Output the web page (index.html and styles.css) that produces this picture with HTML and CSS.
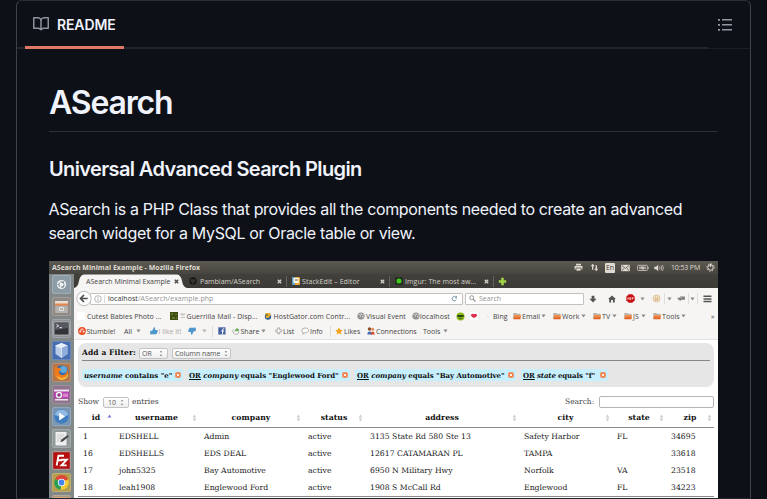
FILE: index.html
```html
<!DOCTYPE html>
<html lang="en">
<head>
<meta charset="utf-8">
<title>ASearch README</title>
<link rel="stylesheet" href="styles.css">
</head>
<body>
<svg class="defs" width="0" height="0" aria-hidden="true">
  <defs>
    <linearGradient id="orange" x1="0" y1="0" x2="0" y2="1"><stop offset="0" stop-color="#f59a5c"/><stop offset="1" stop-color="#de5a1c"/></linearGradient>
    <symbol id="folder" viewBox="0 0 8 8"><path d="M.3 1h3l.7.8h3.4V7H.3z" fill="#b9b3ab"/><path d="M1 3h7l-.6 4.3H.4z" fill="url(#orange)"/></symbol>
    <symbol id="tri" viewBox="0 0 5 4"><path d="M.4.5h4.2L2.5 3.6z" fill="#8b8b8b"/></symbol>
    <symbol id="globe" viewBox="0 0 8 8"><circle cx="4" cy="4" r="3.6" fill="#8d8d8d"/><path d="M1.2 2.5l2 .4.6 1.4-1.2 1M4.2 1l-.4 1.2 1.5.5 1.6-.4M5 4.400l1.5.3-.9 1.5" stroke="#ddd" stroke-width=".8" fill="none"/></symbol>
    <symbol id="close" viewBox="0 0 5 5"><path d="M.8.8l3.4 3.4M4.2.8L.8 4.2" stroke="currentColor" stroke-width="1.3"/></symbol>
    <symbol id="remove" viewBox="0 0 6 6"><rect x=".3" y=".3" width="5.4" height="5.4" rx="1" fill="#f37a3e"/><path d="M1.7 1.7l2.6 2.6M4.3 1.7L1.7 4.3" stroke="#fff" stroke-width=".9"/></symbol>
    <symbol id="spin" viewBox="0 0 4 7"><path d="M.7 2.3L2 .8l1.3 1.5zM.7 4.7L2 6.2l1.3-1.5z" fill="#777"/></symbol>
    <symbol id="sort" viewBox="0 0 5 8"><path d="M.7 3.4L2.5.6l1.8 2.8zM.7 4.6l1.8 2.8 1.8-2.8z" fill="#cccccc"/></symbol>
    <symbol id="asc" viewBox="0 0 5 8"><path d="M.5 3.4L2.5.6l2 2.8z" fill="#7b7be0"/></symbol>
    <symbol id="thumb" viewBox="0 0 8 8"><path d="M.2 3.7h2L4 .3c1.200-.2 1.400.8.900 2.600h2.500c.7.400.4 1 .1 1.200.3.500.1 1-.3 1.100.2.500 0 .9-.4 1 .1.600-.2 1-.8 1H2.200L.2 7.600z" fill="#4e97cc"/></symbol>
  </defs>
</svg>

<main class="panel">
  <header class="panel-head">
    <div class="head-main">
      <a class="tab-readme">
        <svg width="16" height="16" viewBox="0 0 16 16" fill="#8b929b"><path d="M0 1.75A.75.75 0 0 1 .75 1h4.253c1.227 0 2.317.59 3 1.501A3.743 3.743 0 0 1 11.006 1h4.245a.75.75 0 0 1 .75.75v10.5a.75.75 0 0 1-.75.75h-4.507a2.25 2.25 0 0 0-1.591.659l-.622.621a.75.75 0 0 1-1.06 0l-.622-.621A2.25 2.25 0 0 0 5.258 13H.75a.75.75 0 0 1-.75-.75Zm7.251 10.324.004-5.073-.002-2.253A2.25 2.25 0 0 0 5.003 2.5H1.5v9h3.757a3.75 3.75 0 0 1 1.994.574ZM8.755 4.75l-.004 7.322a3.752 3.752 0 0 1 1.992-.572H14.5v-9h-3.495a2.25 2.25 0 0 0-2.25 2.25Z"/></svg>
        <span>README</span>
      </a>
    </div>
    <div class="head-side">
      <svg width="16" height="16" viewBox="0 0 16 16" fill="#9198a1"><path d="M5 3.1h10v1.3H5zM5 8.1h10v1.3H5zM5 13.1h10v1.3H5zM1 2.9h2v1.8H1zM1 7.9h2v1.8H1zM1 12.9h2v1.8H1z"/></svg>
    </div>
  </header>

  <article class="readme">
    <h1>ASearch</h1>
    <h2>Universal Advanced Search Plugin</h2>
    <p>ASearch is a PHP Class that provides all the components needed to create an advanced<br>search widget for a MySQL or Oracle table or view.</p>

    <section class="desktop">
      <div class="titlebar">
        <b>ASearch Minimal Example - Mozilla Firefox</b>
        <svg width="9" height="9" viewBox="0 0 9 9" fill="#dfdbd2"><path d="M2 .8h5v1.7H2zM.6 3h7.8v3.4H.6z"/><path d="M2 5h5v3H2z" stroke="#4a4741" stroke-width=".7"/></svg>
        <svg width="9" height="9" viewBox="0 0 9 9" fill="#dfdbd2"><path d="M2.7.7l2 2.5H3.3v3.5H2V3.2H.6zM6.3 8.3l2-2.5H7V2.3H5.6v3.5H4.2z"/></svg>
        <span class="lang">En</span>
        <svg width="9" height="8" viewBox="0 0 9 8"><path d="M.2.8h8.6v6.4H.2z" fill="#dfdbd2"/><path d="M1 1.6l3.5 2.8L8 1.6M1 6.4l2.2-2M8 6.4l-2.2-2" stroke="#504d46" stroke-width=".8" fill="none"/></svg>
        <svg width="12" height="8" viewBox="0 0 12 8"><rect x=".6" y="1.3" width="9.8" height="5.2" rx=".8" fill="none" stroke="#c8c4bb" stroke-width=".9"/><path d="M2 2.5h7v2.8H2zM11 2.8h.9v2.3H11z" fill="#a5a29a"/><path d="M5 2.3L4.6 4h2L6 5.6" stroke="#fff" stroke-width=".6" fill="none"/></svg>
        <svg width="10" height="8" viewBox="0 0 10 8"><path d="M.3 2.7h1.8L4.2.8v6.4L2.1 5.3H.3z" fill="#dfdbd2"/><path d="M5.5 2.5q1 1.5 0 3M7 1.7q1.5 2.3 0 4.6M8.4 1q2 3 0 6" fill="none" stroke="#c9c5bc" stroke-width=".8"/></svg>
        <span class="clock">10:53 PM</span>
        <svg width="9" height="9" viewBox="0 0 9 9" fill="none" stroke="#dfdbd2"><circle cx="4.5" cy="4.5" r="2.7" stroke-width="1"/><circle cx="4.5" cy="4.5" r="3.700" stroke-width="1" stroke-dasharray="1.300 1.600"/><path d="M4.500.8v3.200" stroke-width="1"/></svg>
      </div>

      <div class="workspace">
        <nav class="launcher">
          <svg class="tile t-ubuntu" viewBox="0 0 19 19"><circle cx="9.5" cy="9.5" r="4.6" fill="#f2f3f3"/><circle cx="9.5" cy="9.5" r="2.6" fill="none" stroke="#7f8e97" stroke-width="1.1" stroke-dasharray="4.4 1"/><path d="M5.4 9.5h1M11.4 6l-.6.9M11.4 13l-.6-.9" stroke="#7f8e97"/></svg>
          <svg class="tile t-files" viewBox="0 0 19 19"><path d="M3 4h13v12H3z" fill="#a9a29a"/><path d="M3 4h13v3H3z" fill="#e6ddd3"/><path d="M3 6.5h13v2H3z" fill="#e8844c"/><path d="M3.5 9h12v7h-12z" fill="#b6b2ad"/><path d="M7.5 10.5h4v3h-4z" fill="none" stroke="#eee" stroke-width=".8"/></svg>
          <svg class="tile t-term" viewBox="0 0 19 19"><rect x="2" y="3" width="15" height="13" rx="1" fill="#32343a" stroke="#d0d0d0" stroke-width=".7"/><path d="M3 4h13v5L3 11z" fill="#555860"/><path d="M4.5 5.5l2 1.3-2 1.3M7.5 8.7h2.5" stroke="#fff" stroke-width=".9" fill="none"/></svg>
          <svg class="tile t-box" viewBox="0 0 19 19"><path d="M9.5 2l6 2.5v8.6l-6 3.9-6-3.9V4.5z" fill="#b7cce9"/><path d="M9.5 2l6 2.5-6 2.6-6-2.6z" fill="#e7f0fa"/><path d="M9.5 7.1l6-2.6v8.6l-6 3.9z" fill="#8faedb"/><path d="M3.5 4.5l6 2.6V17" fill="none" stroke="#fff" stroke-width=".6"/></svg>
          <svg class="tile t-fox" viewBox="0 0 19 19"><circle cx="9.8" cy="9.5" r="7" fill="#2d69ae"/><circle cx="11.3" cy="6.500" r="3.6" fill="#60a9dc"/><path d="M2.600 5.500q.3-1.700 1.800-2.900l.6 2.200q2.700-.6 4.300 1.700L7 8.500q0 3.500 4 3.600 3.300-.3 4.600-5.800 1.700 3 .4 6-2 4.700-6.800 4.600-4.400-.1-6.300-4-1.200-3.700-.3-7.400z" fill="#ee7a1b"/><path d="M4.500 12q3 4 7.500 2.600 3-1 4.500-4-.5 6-6.700 6.300-4-.2-5.300-4.900z" fill="#f7bd3a"/></svg>
          <svg class="tile t-shot" viewBox="0 0 19 19"><path d="M2 4.500h15v9H2z" fill="#b443ad"/><path d="M2 4.500h15v2H2zM3 14h13v1.500H3z" fill="#e9e3e9"/><circle cx="7" cy="10" r="3.200" fill="#eee"/><circle cx="7" cy="10" r="1.700" fill="#8b378b"/><path d="M11 8.500h5v3.500h-5z" fill="#db83ce"/></svg>
          <svg class="tile t-play" viewBox="0 0 19 19"><circle cx="9.500" cy="9.500" r="7.200" fill="#3e7cc0"/><path d="M2.700 8a7 7 0 0 1 13.600 0q-6 3-13.600 0z" fill="#8eb9e4"/><path d="M7.200 5.600v7.800l6-3.900z" fill="#fff"/></svg>
          <svg class="tile t-edit" viewBox="0 0 19 19"><path d="M3.500 3h11v13.500h-11z" fill="#efefef"/><path d="M5 6h7M5 8h7M5 10h5M5 12h4" stroke="#bdbdbd" stroke-width=".7"/><path d="M8.500 13l1-2.500 6-4.500 1.300 1.600-6 4.800z" fill="#4b4b4b"/></svg>
          <svg class="tile t-fz" viewBox="0 0 19 19"><rect x="1.300" y="1.300" width="16.400" height="16.400" fill="#b70e0e"/><path d="M4.700 14.500L6.500 4.700H12M5.500 9.200h4.500M9.300 8.700h5.500l-5.300 5.700h5.200" fill="none" stroke="#fff" stroke-width="1.900"/></svg>
          <svg class="tile t-chrome" viewBox="0 0 19 19"><circle cx="9.500" cy="9.500" r="7.300" fill="#f4cb32"/><path d="M9.500 9.500L3.200 5.800a7.300 7.300 0 0 1 12.900.4z" fill="#dc4437"/><path d="M9.500 9.500L3.200 5.800a7.300 7.300 0 0 0 5.400 11z" fill="#2b9c56"/><circle cx="9.500" cy="9.500" r="3.700" fill="#fff"/><circle cx="9.500" cy="9.500" r="2.900" fill="#4385ec"/></svg>
          <svg class="tile t-last" viewBox="0 0 19 19"><path d="M2 2h15v5H2z" fill="#d6a878"/></svg>
        </nav>

        <div class="browser">
          <div class="tabs">
            <div class="tab-active"><span>ASearch Minimal Example</span><svg width="5" height="5"><use href="#close"/></svg></div>
            <svg width="8" height="8" viewBox="0 0 8 8"><circle cx="4" cy="4" r="3.700" fill="#171717"/><path d="M1.800 1.500l1.200.7h2l1.200-.7.200 2.800q-.5 1-1.700 1.200v2H3.300v-2Q2 5.300 1.600 4.300z" fill="#35342f"/></svg>
            <span>Pamblam/ASearch</span>
            <svg width="5" height="5"><use href="#close"/></svg>
            <i class="sep"></i>
            <svg width="8" height="8" viewBox="0 0 8 8"><rect width="8" height="8" rx="1" fill="#e9a83c"/><path d="M0 0h3v8H1q-1 0-1-1z" fill="#5e9fce"/><path d="M1.500 1h5.200v5H1.500z" fill="#fffbe6"/><path d="M3.800 2v2M5 2v2" stroke="#555" stroke-width=".8"/></svg>
            <span class="stack">StackEdit – Editor</span>
            <svg width="5" height="5"><use href="#close"/></svg>
            <i class="sep"></i>
            <svg width="8" height="8" viewBox="0 0 8 8"><rect width="8" height="8" rx="1" fill="#24301f"/><circle cx="4" cy="4" r="2.500" fill="#42c71c"/></svg>
            <span class="imgur">Imgur: The most aw...</span>
            <svg width="5" height="5"><use href="#close"/></svg>
            <i class="sep"></i>
            <svg width="9" height="9" viewBox="0 0 9 9"><path d="M3.200.8h2.600v2.400h2.400v2.600H5.800v2.400H3.200V5.800H.8V3.200h2.400z" fill="#a4d444"/></svg>
          </div>

          <div class="toolbar">
            <svg class="back" width="17" height="17" viewBox="0 0 17 17"><circle cx="8" cy="8.500" r="7.200" fill="#fdfdfd" stroke="#b4b4b2" stroke-width=".9"/><path d="M8 5L4.500 8.500 8 12M5 8.500h6.700" fill="none" stroke="#4c4c4c" stroke-width="1.700"/></svg>
            <div class="urlbar">
              <svg width="8" height="8" viewBox="0 0 8 8" fill="none" stroke="#a5a5a5"><circle cx="4" cy="4" r="3.300" stroke-width=".8"/><path d="M4 1.900v.9M4 3.500v2.500" stroke-width=".9"/></svg>
              <i></i>
              <span><em>localhost</em>/ASearch/example.php</span>
              <svg width="7" height="7" viewBox="0 0 7 7"><path d="M5.300 4.700A2.200 2.200 0 1 1 5 2.200" fill="none" stroke="#7895a5" stroke-width="1"/><path d="M6 .7v2.600H3.700z" fill="#7895a5"/></svg>
            </div>
            <div class="searchbar">
              <svg width="7" height="7" viewBox="0 0 7 7" fill="none" stroke="#8d8d8d"><circle cx="2.700" cy="2.700" r="2" stroke-width=".9"/><path d="M4.200 4.200l2.200 2.300" stroke-width="1.100"/></svg>
              <span>Search</span>
            </div>
            <svg width="8" height="8" viewBox="0 0 8 8"><path d="M2.600.7h2.800v3h2.200L4 7.500.4 3.700h2.200z" fill="#555"/></svg>
            <svg width="8" height="8" viewBox="0 0 8 8"><path d="M4 .4l3.900 3.500H6.800v3.500H4.900V5H3.100v2.400H1.200V3.900H.1z" fill="#555"/></svg>
            <svg width="9" height="9" viewBox="0 0 9 9"><path d="M2.700.3h3.600l2.400 2.400v3.600L6.300 8.700H2.700L.3 6.300V2.700z" fill="#c90f12"/><path d="M1.400 5.500l.8-2 .8 2M3.800 3.600v1.900h.8V3.600zM6.200 5.600v-2h1v1H6.200" stroke="#fff" stroke-width=".6" fill="none"/></svg>
            <svg width="5" height="4"><use href="#tri"/></svg>
            <svg width="9" height="9" viewBox="0 0 9 9"><circle cx="4.500" cy="4.500" r="3.500" fill="#f3dfbf" stroke="#d6bd94" stroke-width=".8"/><path d="M3 3.700h.8M5.300 3.700h.8M3 6q1.500-1.400 3 0" stroke="#a98754" stroke-width=".8" fill="none"/></svg>
            <i class="sep"></i>
            <svg width="5" height="4"><use href="#tri"/></svg>
            <svg width="9" height="8" viewBox="0 0 9 8"><path d="M.5 2.800h2l.8-1.200h4.500v3.200H4L3 6.400l-.4-1.600H1.200z" fill="#777"/><path d="M2.500 2.800h3" stroke="#ddd" stroke-width=".6"/></svg>
            <i class="sep"></i>
            <svg width="5" height="4"><use href="#tri"/></svg>
            <i class="sep"></i>
            <svg width="9" height="8" viewBox="0 0 9 8"><path d="M.5 1.200h8M.5 3.900h8M.5 6.600h8" stroke="#555" stroke-width="1.500"/></svg>
          </div>

          <div class="bookmarks">
            <i class="blank"></i><span>Cutest Babies Photo ...</span>
            <svg width="8" height="8" viewBox="0 0 8 8"><rect width="8" height="8" fill="#3e4f15"/><path d="M1 1h2v2H1zM5 2h2v1H5zM2 5h3v2H2zM6 5h1v2H6z" fill="#667724"/></svg>
            <svg width="6" height="6" viewBox="0 0 6 6"><path d="M.5 1h4.500M.5 4.600h4.500M.8 1.200l2 1.300 2-1.300" stroke="#aaa" stroke-width=".7" fill="none"/></svg>
            <span>Guerrilla Mail - Disp...</span>
            <svg width="8" height="8" viewBox="0 0 8 8"><circle cx="4" cy="4.500" r="3.200" fill="#315f96"/><path d="M1.500 1h4.300l1.200 2-2.700 3H2z" fill="#e5ae2c"/><circle cx="3" cy="3" r=".7" fill="#222"/></svg>
            <span>HostGator.com Contr...</span>
            <svg width="8" height="8"><use href="#globe"/></svg><span>Visual Event</span>
            <svg width="8" height="8"><use href="#globe"/></svg><span>localhost</span>
            <svg width="9" height="9" viewBox="0 0 9 9"><circle cx="4.500" cy="4.500" r="4" fill="#87b71a"/><path d="M1.400 3h6.200v2H1.400z" fill="#2f4511"/><path d="M3 6.400h3" stroke="#2f4511" stroke-width=".8"/></svg>
            <svg width="8" height="8" viewBox="0 0 8 8"><rect width="8" height="8" fill="#fff"/><path d="M.7 3.200q1.700-2.200 3.300-.9 1.600-1.300 3.300.9Q4 8.800.7 3.200z" fill="#df2f50"/></svg>
            <span class="dim">·</span><span>Bing</span>
            <svg width="8" height="8"><use href="#folder"/></svg><span>Email</span><svg width="5" height="4"><use href="#tri"/></svg>
            <svg width="8" height="8"><use href="#folder"/></svg><span>Work</span><svg width="5" height="4"><use href="#tri"/></svg>
            <svg width="8" height="8"><use href="#folder"/></svg><span>TV</span><svg width="5" height="4"><use href="#tri"/></svg>
            <svg width="8" height="8"><use href="#folder"/></svg><span>JS</span><svg width="5" height="4"><use href="#tri"/></svg>
            <svg width="8" height="8"><use href="#folder"/></svg><span>Tools</span><svg width="5" height="4"><use href="#tri"/></svg>
            <span>»</span>
          </div>

          <div class="stumble">
            <svg width="8" height="8" viewBox="0 0 8 8"><circle cx="4" cy="4" r="3.900" fill="#e94f26"/><path d="M1.500 4.200v.6q.8 1 1.300 0V3q.2-1.200 1.200-1.200T5.200 3v.4M5.200 4v1q.6.900 1.300-.2v-.7" stroke="#fff" stroke-width=".9" fill="none"/></svg>
            <span>Stumble!</span><span>All</span><svg width="5" height="4"><use href="#tri"/></svg>
            <svg width="8" height="8"><use href="#thumb"/></svg><span class="dim">I like it!</span>
            <svg class="down" width="8" height="8"><use href="#thumb"/></svg><svg class="faint" width="5" height="4"><use href="#tri"/></svg>
            <i class="sep"></i>
            <svg width="8" height="8" viewBox="0 0 8 8"><rect x=".3" y=".3" width="7.200" height="7.200" fill="#43619d"/><path d="M6.200 1.700H5.500q-.9 0-.9.900v4.900M3.400 4h2.700" stroke="#fff" stroke-width="1" fill="none"/></svg>
            <svg width="8" height="8" viewBox="0 0 8 8"><path d="M1.800 2.300a3 3 0 1 0 4.500.5" fill="none" stroke="#9aa" stroke-width=".8"/><path d="M2.500 5q0-2.800 2-3V.8l2.800 2-2.800 2V3.600Q3 3.700 2.500 5z" fill="#62a64b"/></svg>
            <span>Share</span><svg width="5" height="4"><use href="#tri"/></svg>
            <svg width="8" height="8" viewBox="0 0 8 8"><path d="M2.800.9h1.900v2h2v1.900h-2v2H2.800v-2h-2V2.900h2z" fill="#fff" stroke="#999" stroke-width=".8"/></svg><span>List</span>
            <svg width="8" height="8" viewBox="0 0 8 8"><path d="M4.200 1c2 0 3.300.9 3.300 2.400S6 5.800 4 5.800L1.800 7.200l.4-1.800Q.8 4.800.8 3.400.8 1 4.200 1z" fill="#fff" stroke="#999" stroke-width=".8"/></svg><span>Info</span>
            <i class="sep"></i>
            <svg width="8" height="8" viewBox="0 0 8 8"><path d="M4 .3l1.100 2.500 2.700.3-2 1.800.6 2.700L4 6.200 1.600 7.600l.6-2.700-2-1.800 2.700-.3z" fill="#f3a11e"/></svg><span>Likes</span>
            <svg width="8" height="8" viewBox="0 0 8 8"><circle cx="2.500" cy="2" r="1.700" fill="#8b4a2a"/><circle cx="5.700" cy="2.300" r="1.500" fill="#d98e5c"/><path d="M.3 7.500q0-3 2.500-3t2.500 3z" fill="#3e6fb5"/><path d="M3.600 7.500q.5-3 2.200-3t2 3z" fill="#d74f33"/></svg><span>Connections</span>
            <span>Tools</span><svg width="5" height="4"><use href="#tri"/></svg>
          </div>

          <div class="content">
            <div class="filters">
              <div class="filter-add">
                <b>Add a Filter:</b>
                <span class="select sel-or">OR<svg width="4" height="7"><use href="#spin"/></svg></span>
                <span class="select sel-col">Column name<svg width="4" height="7"><use href="#spin"/></svg></span>
              </div>
              <div class="chips">
                <span class="chip c1"><span><i>username</i> contains "e"</span><svg width="6" height="6"><use href="#remove"/></svg></span>
                <span class="chip c2"><span><u>OR</u> <i>company</i> equals "Englewood Ford"</span><svg width="6" height="6"><use href="#remove"/></svg></span>
                <span class="chip c3"><span><u>OR</u> <i>company</i> equals "Bay Automotive"</span><svg width="6" height="6"><use href="#remove"/></svg></span>
                <span class="chip c4"><span><u>OR</u> <i>state</i> equals "f"</span><svg width="6" height="6"><use href="#remove"/></svg></span>
              </div>
            </div>

            <div class="controls">
              <span>Show</span><span class="select sel-len">10<svg width="4" height="7"><use href="#spin"/></svg></span><span>entries</span>
              <label>Search:</label><span class="input"></span>
            </div>

            <div class="table">
              <div class="row head">
                <div><b>id</b><svg width="5" height="8"><use href="#asc"/></svg></div>
                <div><b>username</b><svg width="5" height="8"><use href="#sort"/></svg></div>
                <div><b>company</b><svg width="5" height="8"><use href="#sort"/></svg></div>
                <div><b>status</b><svg width="5" height="8"><use href="#sort"/></svg></div>
                <div><b>address</b><svg width="5" height="8"><use href="#sort"/></svg></div>
                <div><b>city</b><svg width="5" height="8"><use href="#sort"/></svg></div>
                <div><b>state</b><svg width="5" height="8"><use href="#sort"/></svg></div>
                <div><b>zip</b><svg width="5" height="8"><use href="#sort"/></svg></div>
              </div>
              <div class="row"><div>1</div><div>EDSHELL</div><div>Admin</div><div>active</div><div>3135 State Rd 580 Ste 13</div><div>Safety Harbor</div><div>FL</div><div>34695</div></div>
              <div class="row"><div>16</div><div>EDSHELLS</div><div>EDS DEAL</div><div>active</div><div>12617 CATAMARAN PL</div><div>TAMPA</div><div></div><div>33618</div></div>
              <div class="row"><div>17</div><div>john5325</div><div>Bay Automotive</div><div>active</div><div>6950 N Military Hwy</div><div>Norfolk</div><div>VA</div><div>23518</div></div>
              <div class="row"><div>18</div><div>leah1908</div><div>Englewood Ford</div><div>active</div><div>1908 S McCall Rd</div><div>Englewood</div><div>FL</div><div>34223</div></div>
            </div>
          </div>
        </div>
      </div>
    </section>
  </article>
</main>
</body>
</html>
```
FILE: styles.css
```css
* { box-sizing: border-box; }

body {
  margin: 0;
  height: 499px;
  overflow: hidden;
  background: #0d1017;
  color: #f0f3fb;
  font-family: Inter, sans-serif;
}

svg { display: block; flex: none; }
.defs { height: 0; }

.panel {
  width: 735px;
  height: 499px;
  margin-left: 16px;
  border: 1px solid #3d434b;
  border-top-color: #2a2e36;
  border-bottom-color: #22262e;
  border-radius: 6px 6px 0 0;
}

.panel-head { display: flex; height: 48px; }
.head-main {
  width: 691px;
  padding-left: 8px;
  border-bottom: 2px solid #21252d;
}
.tab-readme {
  display: flex;
  align-items: center;
  gap: 8px;
  width: 99px;
  height: 48px;
  padding: 0 8px;
  border-bottom: 3px solid #df7864;
  font-size: 14px;
  font-weight: 600;
  letter-spacing: -.13px;
}
.tab-readme span { padding-top: 2px; }
.head-side {
  flex: 1;
  padding: 15px 0 0 9px;
  border-bottom: 1px solid #1a1e26;
}

.readme { padding: 33px 32px 0; }
h1, h2, p { margin: 0; }
h1 {
  height: 50px;
  margin-bottom: 25px;
  border-bottom: 1px solid #2d323a;
  font-size: 32px;
  font-weight: 600;
  line-height: 42px;
  letter-spacing: -1.16px;
}
h2 {
  margin-bottom: 15px;
  font-size: 20px;
  font-weight: 600;
  line-height: 25px;
  letter-spacing: -.62px;
}
p {
  margin: 0 0 16px -.5px;
  font-size: 16px;
  line-height: 24px;
  letter-spacing: -.355px;
  white-space: nowrap;
}

.desktop {
  width: 669px;
  height: 237px;
  overflow: hidden;
  background: #fff;
  color: #444;
  font: 7px/1 "Open Sans", sans-serif;
  white-space: nowrap;
}

.titlebar {
  display: grid;
  grid-template-columns: 522px 16px 15px 16px 15.5px 17.5px 17px 34.5px 9px;
  align-items: center;
  height: 13px;
  padding-left: 3px;
  background: linear-gradient(#5d5a53, #47453f);
  color: #dfdbd2;
}
.titlebar b { letter-spacing: .01px; }
.lang {
  width: 10px;
  padding: 1.5px 0;
  border-radius: 1px;
  background: #dfdbd2;
  color: #45433e;
  text-align: center;
}
.clock { letter-spacing: -.14px; }

.workspace { display: flex; }
.launcher {
  display: flex;
  flex-direction: column;
  gap: 3px;
  width: 25px;
  height: 224px;
  padding: 1px 0 0 3px;
  overflow: hidden;
  background: #838889;
}
.tile {
  width: 19px;
  height: 19px;
  border-radius: 2px;
  box-shadow: inset 0 0 0 1px rgba(255, 255, 255, .18);
}
.t-ubuntu { background: #8b9ca6; }
.t-files { background: #8f8a85; }
.t-term { background: #8d9195; }
.t-box { background: #456db0; }
.t-fox { background: #b0764f; }
.t-shot { background: #8e748c; }
.t-play { background: #7895b4; }
.t-edit { background: #91999a; }
.t-fz { background: #9b8484; }
.t-chrome { background: #b59e4e; }
.t-last { background: #a69886; }

.browser { width: 644px; }
.tabs {
  display: grid;
  grid-template-columns: 115px 11px 77px 9px 6px 10px 78px 9px 6px 10px 78.5px 9px 5px 9px;
  align-items: center;
  height: 14px;
  background: linear-gradient(#42403b, #3b3a36);
  color: #d6d2c9;
}
.tab-active {
  display: flex;
  align-items: center;
  justify-content: space-between;
  width: 113px;
  height: 14px;
  padding: 0 8px 0 12px;
  background: #f6f5f3;
  color: #444;
  clip-path: path("M0 14Q4 13 5 7T10 .5H103Q107 1 108 7T113 14Z");
}
.stack { letter-spacing: .07px; }
.imgur { letter-spacing: .05px; }
.sep { width: 1px; height: 11px; background: #66645e; }

.toolbar {
  display: grid;
  grid-template-columns: 14px 375px 124px 19px 18px 14px 12px 12px 3px 10px 11px 2px 7px 6px 9px;
  align-items: center;
  height: 21px;
  padding-left: 2px;
  background: #f6f5f3;
}
.toolbar .sep, .stumble .sep { background: #dedddb; }
.back { z-index: 1; }
.urlbar, .searchbar {
  display: flex;
  align-items: center;
  height: 12px;
  border: 1px solid #c2c2c0;
  border-radius: 1px;
  background: #fff;
  color: #929292;
}
.urlbar { width: 373px; padding: 0 4px 0 3px; }
.urlbar i { width: 1px; height: 8px; margin: 0 3px 0 2px; background: #ddd; }
.urlbar span { flex: 1; letter-spacing: .06px; }
.urlbar em { color: #333; font-style: normal; }
.searchbar { gap: 3px; width: 119px; padding-left: 3px; }

.bookmarks, .stumble {
  display: grid;
  align-items: center;
  background: #f6f5f3;
}
.bookmarks {
  grid-template-columns:
    10px 83px 10px 6.5px 77.5px 9.5px 83.5px 9px 46px 8px 36px 14px 17px 6px 20px
    9px 19px 12px 9px 19px 12px 9px 10px 12px 9px 8px 12px 9px 19px 30px 7px;
  height: 14px;
  padding-left: 3px;
  letter-spacing: .06px;
}
.blank { width: 8px; height: 8px; background: #fff; }
.dim { color: #aaa; }
.stumble {
  grid-template-columns:
    8.5px 37.5px 12px 14px 8.5px 29.5px 14px 10px 6px 14px 8.5px 20.5px 14px 8px 18px
    9px 20px 5px 9px 23px 9px 47px 20px 5px;
  height: 17px;
  padding-left: 4px;
  border-bottom: 1px solid #e3e2e0;
}
.down { transform: rotate(180deg); }
.faint { opacity: .6; }

.content { padding: 3px 4px 0; font: 7.5px/1 "DejaVu Serif", serif; }
.filters {
  height: 44px;
  padding: 3px 4px 0;
  border-radius: 8px;
  background: #e6e6e6;
  color: #111;
}
.filter-add {
  display: flex;
  align-items: center;
  height: 15px;
  border-bottom: 1px solid #878787;
  letter-spacing: .12px;
}
.select {
  display: flex;
  align-items: center;
  justify-content: space-between;
  height: 11px;
  padding: 0 4px;
  border: 1px solid #c4c4c4;
  border-radius: 2px;
  background: linear-gradient(#fff, #eee);
  color: #555;
  font: 7px/1 "Open Sans", sans-serif;
  letter-spacing: 0;
}
.sel-or { width: 29px; padding-left: 2px; margin-left: 3px; }
.sel-col { width: 59px; padding: 0 2px; margin-left: 4px; letter-spacing: -.04px; }

.chips {
  display: grid;
  grid-template-columns: 106px 167px 166px 87px;
  padding-top: 8px;
}
.chip {
  display: flex;
  align-items: center;
  justify-content: space-between;
  height: 12px;
  padding: 0 2px 0 1px;
  border-radius: 2px;
  background: #c8effd;
  font-size: 7px;
  font-weight: 700;
  letter-spacing: -.02px;
}
.c1 { width: 101px; padding-left: 2px; }
.c2 { width: 162px; letter-spacing: -.01px; }
.c3 { width: 161px; letter-spacing: -.04px; padding-left: 2px; }
.c4 { width: 87px; letter-spacing: -.13px; padding-left: 2px; }

.controls {
  display: grid;
  grid-template-columns: 25px 29px 433px 34px 115px;
  align-items: center;
  height: 30px;
  color: #444;
}
.sel-len { width: 26px; }
.input {
  height: 12px;
  border: 1px solid #b5b5b5;
  border-radius: 2px;
  background: #fff;
}

.table { color: #222; }
.row {
  display: grid;
  grid-template-columns: 36px 85px 104px 62px 154px 93px 54px 48px;
  align-items: center;
  height: 17.1px;
  font-size: 7.7px;
  letter-spacing: .02px;
}
.row > div { padding-left: 5px; }
.head {
  height: 15px;
  margin-top: -4px;
  padding-bottom: 4px;
  border-bottom: 1px solid #8a8a8a;
  color: #111;
}
.row.head > div {
  display: grid;
  grid-template-columns: 1fr;
  align-items: center;
  padding: 0 2.5px;
}
.head b, .head svg { grid-area: 1 / 1; }
.head b { text-align: center; letter-spacing: .06px; }
.head svg { justify-self: end; }
.row:last-child { height: 17.5px; border-bottom: 1px solid #8a8a8a; }
```
